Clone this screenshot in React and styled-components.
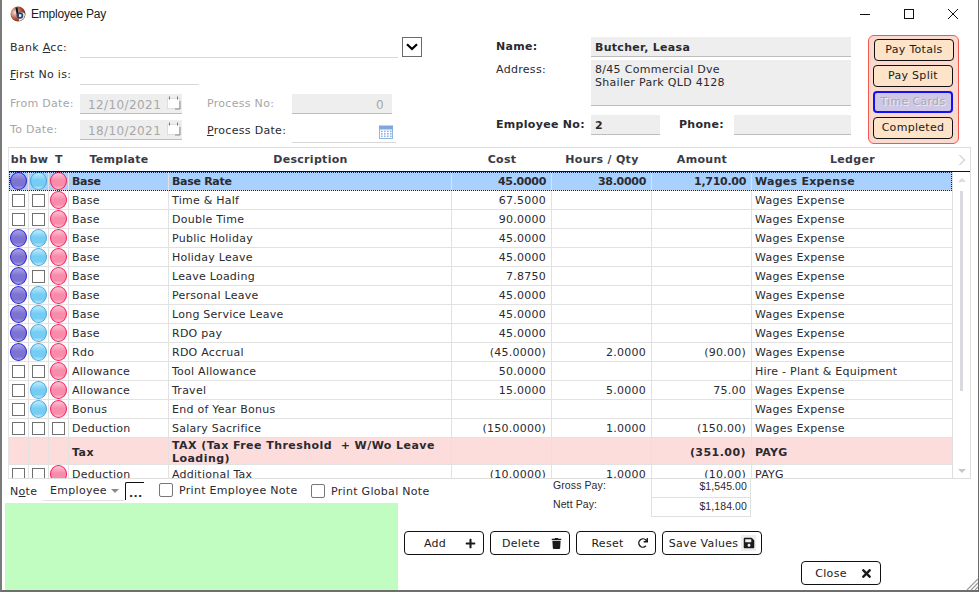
import React from "react";
import styled, { createGlobalStyle } from "styled-components";
import { FaPlus, FaTrash, FaRedo, FaSave, FaTimes } from "react-icons/fa";

const GlobalStyle = createGlobalStyle`
  html, body {
    margin: 0;
    padding: 0;
    background: #fff;
  }
  * {
    box-sizing: border-box;
  }
`;

const COLUMNS = "20px 20px 20px 100px 283px 100px 100px 100px 201px";

const rows = [
  { bh: 1, bw: 1, t: 1, template: "Base", desc: "Base Rate", cost: "45.0000", hours: "38.0000", amount: "1,710.00", ledger: "Wages Expense", kind: "selected" },
  { bh: 0, bw: 0, t: 1, template: "Base", desc: "Time & Half", cost: "67.5000", ledger: "Wages Expense" },
  { bh: 0, bw: 0, t: 1, template: "Base", desc: "Double Time", cost: "90.0000", ledger: "Wages Expense" },
  { bh: 1, bw: 1, t: 1, template: "Base", desc: "Public Holiday", cost: "45.0000", ledger: "Wages Expense" },
  { bh: 1, bw: 1, t: 1, template: "Base", desc: "Holiday Leave", cost: "45.0000", ledger: "Wages Expense" },
  { bh: 1, bw: 0, t: 1, template: "Base", desc: "Leave Loading", cost: "7.8750", ledger: "Wages Expense" },
  { bh: 1, bw: 1, t: 1, template: "Base", desc: "Personal Leave", cost: "45.0000", ledger: "Wages Expense" },
  { bh: 1, bw: 1, t: 1, template: "Base", desc: "Long Service Leave", cost: "45.0000", ledger: "Wages Expense" },
  { bh: 1, bw: 1, t: 1, template: "Base", desc: "RDO pay", cost: "45.0000", ledger: "Wages Expense" },
  { bh: 1, bw: 1, t: 1, template: "Rdo", desc: "RDO Accrual", cost: "(45.0000)", hours: "2.0000", amount: "(90.00)", ledger: "Wages Expense" },
  { bh: 0, bw: 0, t: 1, template: "Allowance", desc: "Tool Allowance", cost: "50.0000", ledger: "Hire - Plant & Equipment" },
  { bh: 0, bw: 1, t: 1, template: "Allowance", desc: "Travel", cost: "15.0000", hours: "5.0000", amount: "75.00", ledger: "Wages Expense" },
  { bh: 0, bw: 1, t: 1, template: "Bonus", desc: "End of Year Bonus", ledger: "Wages Expense" },
  { bh: 0, bw: 0, t: 0, template: "Deduction", desc: "Salary Sacrifice", cost: "(150.0000)", hours: "1.0000", amount: "(150.00)", ledger: "Wages Expense" },
  { template: "Tax", desc: "TAX (Tax Free Threshold  + W/Wo Leave Loading)", amount: "(351.00)", ledger: "PAYG", kind: "tax" },
  { bh: 0, bw: 0, t: 1, template: "Deduction", desc: "Additional Tax", cost: "(10.0000)", hours: "1.0000", amount: "(10.00)", ledger: "PAYG" },
];

const LogoIcon = () => (
  <svg width="16" height="16" viewBox="0 0 16 16">
    <defs>
      <radialGradient id="logoBall" cx="0.3" cy="0.4" r="0.85">
        <stop offset="0" stopColor="#f6dfd2" />
        <stop offset="0.45" stopColor="#b85a44" />
        <stop offset="1" stopColor="#42120e" />
      </radialGradient>
    </defs>
    <circle cx="8" cy="8" r="7.5" fill="url(#logoBall)" />
    <path d="M8.5 8 A4 4 0 0 1 15 8 A7 7 0 0 1 9 15 Z" fill="#f4f0ec" />
    <path d="M6.5 1.5 L8 10.5" stroke="#0e141c" strokeWidth="2" fill="none" />
    <circle cx="10" cy="9.5" r="2.4" fill="none" stroke="#1c4a78" strokeWidth="1.7" />
  </svg>
);

const CalendarIcon = ({ disabled }) =>
  disabled ? (
    <svg width="14" height="14" viewBox="0 0 14 14">
      <rect x="0.5" y="2.5" width="12" height="10" fill="#fff" stroke="#c4c4c4" strokeDasharray="1 1" />
      <path d="M2.5 0.5 V3.5 M10.5 0.5 V3.5" stroke="#777" />
      <path d="M13 5 V13 H8" fill="none" stroke="#8a8a8a" />
    </svg>
  ) : (
    <svg width="14" height="14" viewBox="0 0 14 14">
      <rect x="0.5" y="2.5" width="13" height="11" fill="#fff" stroke="#8fb4e6" />
      <rect x="0.5" y="1" width="13" height="3" fill="#7da7e0" stroke="#7da7e0" />
      {[2, 5, 8, 11].map((x) =>
        [5.5, 8, 10.5].map((y) => (
          <rect key={`${x}-${y}`} x={x} y={y} width="1.6" height="1.6" fill="#8fb4e6" />
        ))
      )}
    </svg>
  );

const Grip = () => (
  <GripWrap width="12" height="12" viewBox="0 0 12 12">
    <path d="M1 12 L12 1 M5 12 L12 5 M9 12 L12 9" stroke="#9a9a9a" strokeWidth="1.2" />
  </GripWrap>
);

const App = () => (
  <>
    <GlobalStyle />
    <Window>
      <TitleBar>
        <TitleLeft>
          <LogoIcon />
          <TitleText>Employee Pay</TitleText>
        </TitleLeft>
        <WindowControls>
          <ControlButton>
            <svg width="12" height="12" viewBox="0 0 12 12">
              <path d="M1 6.5 H11" stroke="#111" />
            </svg>
          </ControlButton>
          <ControlButton>
            <svg width="12" height="12" viewBox="0 0 12 12">
              <rect x="1.5" y="1.5" width="9" height="9" fill="none" stroke="#111" />
            </svg>
          </ControlButton>
          <ControlButton>
            <svg width="12" height="12" viewBox="0 0 12 12">
              <path d="M1 1 L11 11 M11 1 L1 11" stroke="#111" />
            </svg>
          </ControlButton>
        </WindowControls>
      </TitleBar>

      <FormArea>
        <LeftForm>
          <FormRow $h={27}>
            <Label $dy={1}>
              Bank <u>A</u>cc:
            </Label>
            <LineInput $w={318} />
            <DropButton>
              <svg width="12" height="8" viewBox="0 0 12 8">
                <path d="M1 1.2 L6 6 L11 1.2" fill="none" stroke="#000" strokeWidth="2.2" />
              </svg>
            </DropButton>
          </FormRow>
          <FormRow $h={30}>
            <Label $dy={1}>
              <u>F</u>irst No is:
            </Label>
            <LineInput $w={119} />
          </FormRow>
          <FormRow $h={26}>
            <Label $disabled>From Date:</Label>
            <GreyField $w={102}>
              12/10/2021
              <FieldIcon>
                <CalendarIcon disabled />
              </FieldIcon>
            </GreyField>
            <Label $disabled $w={85} $ml={25}>
              Process No:
            </Label>
            <GreyField $w={100} $right>
              0
            </GreyField>
          </FormRow>
          <FormRow $h={26}>
            <Label $disabled>To Date:</Label>
            <GreyField $w={102}>
              18/10/2021
              <FieldIcon>
                <CalendarIcon disabled />
              </FieldIcon>
            </GreyField>
            <Label $w={85} $ml={25} $dy={1}>
              <u>P</u>rocess Date:
            </Label>
            <LineInput $w={104} $h={23}>
              <FieldIcon $x={3} $y={5}>
                <CalendarIcon />
              </FieldIcon>
            </LineInput>
          </FormRow>
        </LeftForm>

        <MiddleForm>
          <MiddleRow>
            <BoldLabel>Name:</BoldLabel>
            <InfoField $w={260} $h={20} $bold>
              Butcher, Leasa
            </InfoField>
          </MiddleRow>
          <MiddleRow>
            <AddressLabel>Address:</AddressLabel>
            <InfoField $w={260} $h={46} $top>
              8/45 Commercial Dve
              <br />
              Shailer Park QLD 4128
            </InfoField>
          </MiddleRow>
          <MiddleRow>
            <BoldLabel>Employee No:</BoldLabel>
            <InfoField $w={69} $h={20} $bold>
              2
            </InfoField>
            <PhoneLabel>Phone:</PhoneLabel>
            <InfoField $w={117} $h={20} />
          </MiddleRow>
        </MiddleForm>

        <ActionPanel>
          <PanelButton $shift={1}>Pay Totals</PanelButton>
          <PanelButton>Pay Split</PanelButton>
          <PanelButton $active>Time Cards</PanelButton>
          <PanelButton>Completed</PanelButton>
        </ActionPanel>
      </FormArea>

      <Table>
        <HeaderRow>
          <HeadCell>bh</HeadCell>
          <HeadCell>bw</HeadCell>
          <HeadCell>T</HeadCell>
          <HeadCell>Template</HeadCell>
          <HeadCell>Description</HeadCell>
          <HeadCell>Cost</HeadCell>
          <HeadCell>Hours / Qty</HeadCell>
          <HeadCell>Amount</HeadCell>
          <HeadCell>Ledger</HeadCell>
          <HeadChevron>
            <svg width="8" height="12" viewBox="0 0 8 12">
              <path d="M1.5 1 L6.5 6 L1.5 11" fill="none" stroke="#b4b4b4" />
            </svg>
          </HeadChevron>
        </HeaderRow>
        <TableBody>
          <RowList>
            {rows.map((row) => (
              <Row key={row.desc} $kind={row.kind}>
                <FlagCell>{row.kind !== "tax" && (row.bh ? <Ball $tone="purple" /> : <Check />)}</FlagCell>
                <FlagCell>{row.kind !== "tax" && (row.bw ? <Ball $tone="cyan" /> : <Check />)}</FlagCell>
                <FlagCell>{row.kind !== "tax" && (row.t ? <Ball $tone="pink" /> : <Check />)}</FlagCell>
                <Cell>{row.template}</Cell>
                <Cell>{row.desc}</Cell>
                <Cell $right>{row.cost}</Cell>
                <Cell $right>{row.hours}</Cell>
                <Cell $right>{row.amount}</Cell>
                <LedgerCell>{row.ledger}</LedgerCell>
              </Row>
            ))}
          </RowList>
          <ScrollBar>
            <ScrollArrow $up />
            <ScrollThumb />
            <ScrollArrow />
          </ScrollBar>
        </TableBody>
      </Table>

      <BottomArea>
        <NoteColumn>
          <NoteRow>
            <NoteLabel>
              N<u>o</u>te
            </NoteLabel>
            <NoteSelect>
              Employee
              <SelectArrow />
            </NoteSelect>
            <DotsButton>...</DotsButton>
            <CheckOption $w={152} $ml={15}>
              <RoundCheck />
              Print Employee Note
            </CheckOption>
            <CheckOption $dy={1}>
              <RoundCheck />
              Print Global Note
            </CheckOption>
          </NoteRow>
          <NoteBox />
        </NoteColumn>

        <ActionsColumn>
          <Totals>
            <TotalLabels>
              <TotalLabel>Gross Pay:</TotalLabel>
              <TotalLabel>Nett Pay:</TotalLabel>
            </TotalLabels>
            <TotalValues>
              <TotalValue>$1,545.00</TotalValue>
              <TotalValue>$1,184.00</TotalValue>
            </TotalValues>
          </Totals>
          <ButtonRow>
            <ActionButton>
              <ButtonText>Add</ButtonText>
              <FaPlus size={11} />
            </ActionButton>
            <ActionButton>
              <ButtonText>Delete</ButtonText>
              <FaTrash size={11} />
            </ActionButton>
            <ActionButton>
              <ButtonText>Reset</ButtonText>
              <FaRedo size={10} />
            </ActionButton>
            <ActionButton $wide>
              <ButtonText>Save Values</ButtonText>
              <SaveIcon>
                <FaSave size={12} />
              </SaveIcon>
            </ActionButton>
          </ButtonRow>
          <CloseRow>
            <ActionButton>
              <ButtonText>Close</ButtonText>
              <FaTimes size={13} />
            </ActionButton>
          </CloseRow>
        </ActionsColumn>
      </BottomArea>
      <Grip />
    </Window>
  </>
);

const Window = styled.div`
  position: relative;
  width: 979px;
  height: 592px;
  overflow: hidden;
  background: #fff;
  border-left: 2px solid #7a7a7a;
  border-right: 1px solid #6a6a6a;
  border-bottom: 2px solid #6e6e6e;
  font-family: "DejaVu Sans", Verdana, sans-serif;
  font-size: 11px;
  letter-spacing: 0.3px;
  color: #2a2a30;
`;

const TitleBar = styled.div`
  display: flex;
  justify-content: space-between;
  height: 28px;
`;

const TitleLeft = styled.div`
  display: flex;
  align-items: center;
  gap: 5px;
  padding-left: 8px;
`;

const TitleText = styled.span`
  font-family: "Liberation Sans", Arial, sans-serif;
  font-size: 12px;
  letter-spacing: -0.2px;
  color: #1a1a1a;
`;

const WindowControls = styled.div`
  display: flex;
  padding-right: 3px;
`;

const ControlButton = styled.div`
  display: flex;
  align-items: center;
  justify-content: center;
  width: 44px;
  height: 28px;
`;

const FormArea = styled.div`
  display: flex;
  height: 119px;
`;

const LeftForm = styled.div`
  width: 494px;
  padding: 9px 0 0 8px;
`;

const FormRow = styled.div`
  display: flex;
  align-items: flex-start;
  height: ${(p) => p.$h}px;
`;

const Label = styled.label`
  flex-shrink: 0;
  width: ${(p) => p.$w || 70}px;
  margin-left: ${(p) => p.$ml || 0}px;
  padding-top: ${(p) => 3 + (p.$dy || 0)}px;
  line-height: 14px;
  white-space: nowrap;
  color: ${(p) => (p.$disabled ? "#a6a6a6" : "#2a2a30")};
`;

const LineInput = styled.div`
  position: relative;
  flex-shrink: 0;
  width: ${(p) => p.$w}px;
  height: ${(p) => p.$h || 21}px;
  border-bottom: 1px solid #d8d8d8;
`;

const DropButton = styled.div`
  display: flex;
  align-items: center;
  justify-content: center;
  width: 20px;
  height: 20px;
  margin-left: 4px;
  border: 1px solid #6a6a6a;
`;

const GreyField = styled.div`
  position: relative;
  flex-shrink: 0;
  width: ${(p) => p.$w}px;
  height: 20px;
  padding: 0 8px;
  line-height: 22px;
  font-size: 12px;
  letter-spacing: 0.4px;
  text-align: ${(p) => (p.$right ? "right" : "left")};
  background: #eeeeee;
  border-bottom: 1px solid #bdbdbd;
  color: #a8a8a8;
`;

const FieldIcon = styled.span`
  position: absolute;
  right: ${(p) => (p.$x === undefined ? 1 : p.$x)}px;
  top: ${(p) => (p.$y === undefined ? 2 : p.$y)}px;
  display: flex;
`;

const MiddleForm = styled.div`
  display: flex;
  flex-direction: column;
  gap: 3px;
  width: 372px;
  padding-top: 9px;
`;

const MiddleRow = styled.div`
  display: flex;
  align-items: flex-start;
  &:last-child {
    margin-top: 6px;
  }
`;

const BoldLabel = styled.span`
  flex-shrink: 0;
  width: 95px;
  padding-top: 3px;
  line-height: 14px;
  font-weight: bold;
  white-space: nowrap;
`;

const AddressLabel = styled.span`
  width: 95px;
  padding-top: 3px;
  line-height: 14px;
`;

const PhoneLabel = styled(BoldLabel)`
  width: 55px;
  margin-left: 19px;
`;

const InfoField = styled.div`
  flex-shrink: 0;
  width: ${(p) => p.$w}px;
  height: ${(p) => p.$h}px;
  padding: ${(p) => (p.$top ? "3px" : "0")} 4px 0;
  line-height: ${(p) => (p.$top ? "13px" : `${p.$h + 1}px`)};
  font-weight: ${(p) => (p.$bold ? "bold" : "normal")};
  background: #eeeeee;
  border-bottom: 1px solid #bdbdbd;
`;

const ActionPanel = styled.div`
  display: flex;
  flex-direction: column;
  gap: 4px;
  width: 91px;
  height: 109px;
  margin: 7px 0 0 0;
  padding: 3px 4px;
  background: #fbd9cf;
  border: 1px solid #f2574c;
  border-radius: 6px;
`;

const PanelButton = styled.div`
  flex-shrink: 0;
  width: 80px;
  height: 22px;
  text-align: center;
  margin-left: ${(p) => p.$shift || 0}px;
  border-radius: 4px;
  background: ${(p) => (p.$active ? "#d0c6e6" : "#fde3c8")};
  border: ${(p) => (p.$active ? "2px solid #1212f0" : "1px solid #111")};
  color: ${(p) => (p.$active ? "#a8a8b4" : "#1a1a1a")};
  text-shadow: ${(p) => (p.$active ? "1px 1px 0 #eee" : "none")};
  line-height: ${(p) => (p.$active ? "18px" : "20px")};
`;

const Table = styled.div`
  width: 963px;
  height: 332px;
  margin-left: 6px;
  border: 1px solid #dedede;
  border-left-color: #e4e4e4;
`;

const HeaderRow = styled.div`
  display: grid;
  grid-template-columns: ${COLUMNS} 1fr;
  height: 24px;
  border-bottom: 1px solid #111;
`;

const HeadCell = styled.div`
  padding-top: 1px;
  line-height: 22px;
  text-align: center;
  font-weight: bold;
  color: #3a3a44;
`;

const HeadChevron = styled.div`
  display: flex;
  align-items: center;
  justify-content: center;
`;

const TableBody = styled.div`
  display: flex;
  height: 306px;
`;

const RowList = styled.div`
  width: 944px;
  overflow: hidden;
`;

const rowSpacing = { selected: "-0.3px", tax: "0.45px" };

const Row = styled.div`
  display: grid;
  grid-template-columns: ${COLUMNS};
  height: ${(p) => (p.$kind === "tax" ? 27 : 19)}px;
  font-weight: ${(p) => (p.$kind ? "bold" : "normal")};
  letter-spacing: ${(p) => rowSpacing[p.$kind] || "0.25px"};
  background: ${(p) =>
    p.$kind === "selected" ? "#a9d1ff" : p.$kind === "tax" ? "#fddcdc" : "#fff"};
  border-bottom: 1px solid #e2e2e2;
  outline: ${(p) => (p.$kind === "selected" ? "1px dotted #222" : "none")};
  outline-offset: -1px;
`;

const FlagCell = styled.div`
  display: flex;
  align-items: center;
  justify-content: center;
  border-right: 1px solid #e2e2e2;
`;

const Cell = styled.div`
  display: flex;
  align-items: center;
  justify-content: ${(p) => (p.$right ? "flex-end" : "flex-start")};
  padding: 1px 5px 0 3px;
  line-height: 13px;
  white-space: pre-wrap;
  border-right: 1px solid #e2e2e2;
`;

const LedgerCell = styled(Cell)`
  letter-spacing: 0.25px;
  border-right: none;
`;

const ballTones = {
  purple: { edge: "#2a1fd0", mid: "#7d74d2", light: "#a9a3e6" },
  cyan: { edge: "#4aa6d8", mid: "#76cdf4", light: "#c0ecfd" },
  pink: { edge: "#f01f5e", mid: "#f98bab", light: "#fdc6d6" },
};

const Ball = styled.span`
  display: block;
  width: 17px;
  height: 18px;
  border-radius: 50%;
  border: 1px solid ${(p) => ballTones[p.$tone].edge};
  background: linear-gradient(
    ${(p) => ballTones[p.$tone].light} 0%,
    ${(p) => ballTones[p.$tone].mid} 45%,
    ${(p) => ballTones[p.$tone].mid} 80%,
    ${(p) => ballTones[p.$tone].light} 100%
  );
`;

const Check = styled.span`
  display: block;
  width: 13px;
  height: 13px;
  border: 1px solid #707070;
  background: #fff;
`;

const ScrollBar = styled.div`
  display: flex;
  flex-direction: column;
  align-items: center;
  width: 18px;
  border-left: 1px solid #dedede;
  padding: 6px 0 5px;
`;

const ScrollArrow = styled.span`
  flex-shrink: 0;
  width: 0;
  height: 0;
  border-left: 4px solid transparent;
  border-right: 4px solid transparent;
  ${(p) => (p.$up ? "border-bottom: 4px solid #dcdcdc;" : "border-top: 4px solid #c8c8c8; margin-top: auto;")}
`;

const ScrollThumb = styled.span`
  width: 3px;
  height: 200px;
  margin-top: 9px;
  background: #d8dae0;
`;

const BottomArea = styled.div`
  display: flex;
  height: 112px;
  margin-top: -1px;
`;

const NoteColumn = styled.div`
  display: flex;
  flex-direction: column;
  width: 396px;
  padding: 0 0 0 3px;
`;

const NoteRow = styled.div`
  display: flex;
  align-items: flex-start;
  flex-shrink: 0;
  height: 25px;
  white-space: nowrap;
  padding-left: 5px;
`;

const NoteLabel = styled.span`
  flex-shrink: 0;
  width: 33px;
  padding-top: 7px;
  line-height: 14px;
`;

const NoteSelect = styled.div`
  display: flex;
  align-items: center;
  flex-shrink: 0;
  gap: 4px;
  width: 81px;
  height: 22px;
  margin-top: 1px;
  padding: 2px 0 0 7px;
  border-bottom: 1px solid #e0e0e0;
`;

const SelectArrow = styled.span`
  width: 0;
  height: 0;
  border-left: 4px solid transparent;
  border-right: 4px solid transparent;
  border-top: 4px solid #8a8a8a;
`;

const DotsButton = styled.div`
  flex-shrink: 0;
  width: 19px;
  height: 18px;
  margin: 4px 0 0 1px;
  padding-left: 3px;
  line-height: 21px;
  font-weight: bold;
  border-top: 1px solid #111;
  border-left: 1px solid #111;
  border-radius: 2px 0 0 0;
`;

const CheckOption = styled.label`
  display: flex;
  align-items: center;
  flex-shrink: 0;
  gap: 6px;
  width: ${(p) => (p.$w ? `${p.$w}px` : "auto")};
  height: 16px;
  margin: ${(p) => 4 + (p.$dy || 0)}px 0 0 ${(p) => p.$ml || 0}px;
`;

const RoundCheck = styled.span`
  flex-shrink: 0;
  width: 14px;
  height: 14px;
  border: 1px solid #777;
  border-radius: 2px;
  background: #fff;
`;

const NoteBox = styled.div`
  flex: 1;
  width: 393px;
  background: #c1fcc1;
`;

const ActionsColumn = styled.div`
  width: 500px;
`;

const Totals = styled.div`
  display: flex;
  height: 39px;
  padding-left: 155px;
`;

const TotalLabels = styled.div`
  width: 98px;
`;

const TotalLabel = styled.div`
  height: 19px;
  line-height: 15px;
  font-family: "Liberation Sans", Arial, sans-serif;
  font-size: 10.5px;
  letter-spacing: 0.1px;
`;

const TotalValues = styled.div`
  width: 100px;
  border: 1px solid #e0e0e0;
  border-top: none;
`;

const TotalValue = styled.div`
  height: 19px;
  padding-right: 3px;
  line-height: 17px;
  text-align: right;
  font-family: "Liberation Sans", Arial, sans-serif;
  font-size: 10.5px;
  letter-spacing: 0.1px;
  & + & {
    border-top: 1px solid #e0e0e0;
  }
`;

const ButtonRow = styled.div`
  display: flex;
  gap: 6px;
  margin-top: 14px;
  padding-left: 6px;
`;

const CloseRow = styled.div`
  display: flex;
  margin-top: 6px;
  padding-left: 403px;
`;

const ActionButton = styled.div`
  display: flex;
  align-items: center;
  justify-content: space-between;
  width: ${(p) => (p.$wide ? 100 : 80)}px;
  height: 24px;
  padding: 0 ${(p) => (p.$wide ? 5 : 7)}px 0 ${(p) => (p.$wide ? 3 : 0)}px;
  border: 1px solid #111;
  border-radius: 4px;
  color: #1a1a1a;
  background: #fff;
  svg {
    flex-shrink: 0;
  }
`;

const ButtonText = styled.span`
  flex: 1;
  text-align: center;
  white-space: nowrap;
`;

const SaveIcon = styled.span`
  display: flex;
  align-items: center;
  justify-content: center;
  width: 15px;
  height: 16px;
  background: #eeeeee;
`;

const GripWrap = styled.svg`
  position: absolute;
  right: 0;
  bottom: 0;
`;

export default App;
